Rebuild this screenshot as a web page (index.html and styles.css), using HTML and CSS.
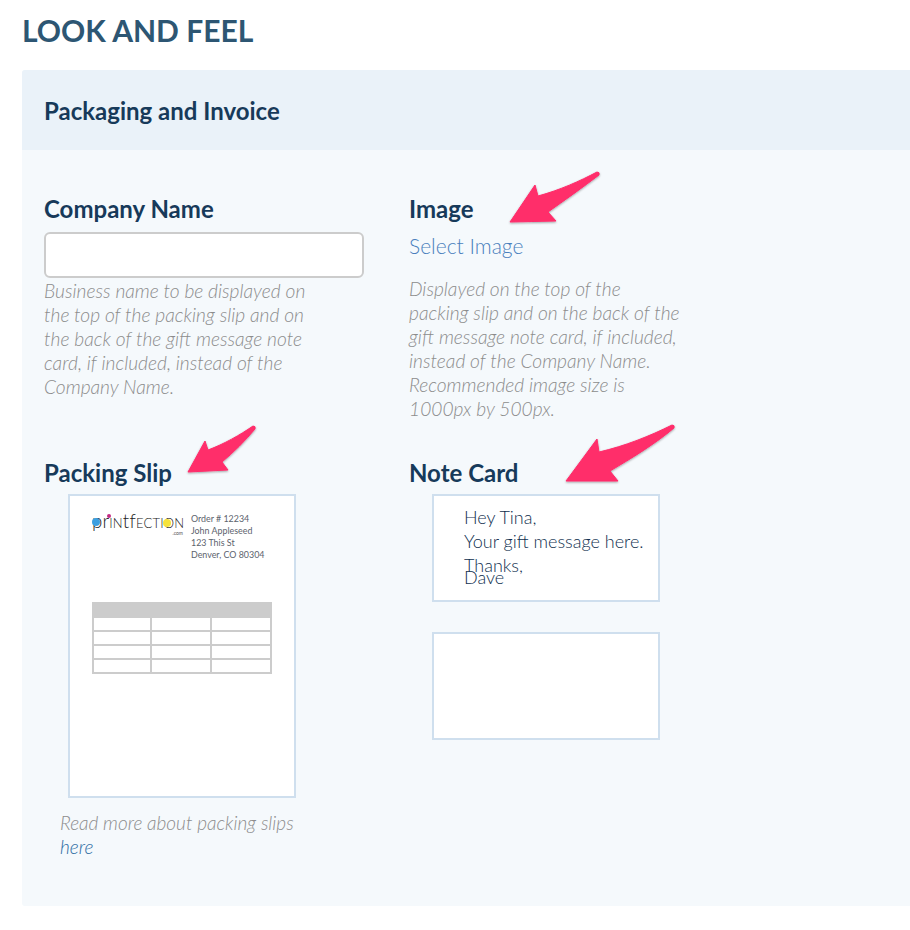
FILE: index.html
```html
<!DOCTYPE html>
<html lang="en">
<head>
    <meta charset="UTF-8">
    <meta name="viewport" content="width=device-width, initial-scale=1.0">
    <title>Look and Feel</title>
    <link rel="stylesheet" href="styles.css">
</head>
<body>
    <h1 class="page-title">LOOK AND FEEL</h1>

    <div class="panel">
        <div class="panel-header">Packaging and Invoice</div>
        <div class="panel-body">
            <div class="field">
                <label class="field-label">Company Name</label>
                <input class="text-input" type="text">
                <p class="hint">Business name to be displayed on the top of the packing slip and on the back of the gift message note card, if included, instead of the Company Name.</p>
            </div>
            <div class="field">
                <label class="field-label">Image</label>
                <a class="select-link" href="#">Select Image</a>
                <p class="hint hint-image">Displayed on the top of the packing slip and on the back of the gift message note card, if included, instead of the Company Name. Recommended image size is 1000px by 500px.</p>
            </div>

            <div class="field">
                <label class="field-label">Packing Slip</label>
                <div class="slip">
                    <div class="slip-top">
                        <div class="logo">
                            <span class="logo-name">pr<span class="logo-small">in</span>tf<span class="logo-small">ection</span></span>
                            <span class="logo-dot logo-dot-blue"></span>
                            <span class="logo-dot logo-dot-pink"></span>
                            <span class="logo-dot logo-dot-yellow"></span>
                            <span class="logo-com">.com</span>
                        </div>
                        <div class="slip-address">
                            Order # 12234<br>
                            John Appleseed<br>
                            123 This St<br>
                            Denver, CO 80304
                        </div>
                    </div>
                    <div class="slip-table">
                        <div class="slip-table-head"></div>
                        <div class="slip-cell"></div><div class="slip-cell"></div><div class="slip-cell"></div>
                        <div class="slip-cell"></div><div class="slip-cell"></div><div class="slip-cell"></div>
                        <div class="slip-cell"></div><div class="slip-cell"></div><div class="slip-cell"></div>
                        <div class="slip-cell"></div><div class="slip-cell"></div><div class="slip-cell"></div>
                    </div>
                </div>
                <p class="hint hint-slip">Read more about packing slips <a href="#">here</a></p>
            </div>
            <div class="field">
                <label class="field-label">Note Card</label>
                <div class="card">
                    <div class="card-line">Hey Tina,</div>
                    <div class="card-line">Your gift message here.</div>
                    <div class="card-line">Thanks,</div>
                    <div class="card-line card-sign">Dave</div>
                </div>
                <div class="card card-back"></div>
            </div>
        </div>
    </div>

    <!-- annotation arrows -->
    <svg class="arrows" width="910" height="930" viewBox="0 0 910 930">
        <defs>
            <filter id="arrow-shadow" x="-20%" y="-20%" width="140%" height="140%">
                <feDropShadow dx="0" dy="1" stdDeviation="1" flood-color="#000" flood-opacity="0.35"/>
            </filter>
        </defs>
        <g fill="#ff2d6b" stroke="#ff2d6b" stroke-width="1" stroke-linejoin="round" filter="url(#arrow-shadow)">
            <path d="M510 222 L535 185 L538 196 C560 190 580 181 597 172 Q600 172 599 175 C582 188 565 200 548 212 L556 221 Z"/>
            <path d="M188 472 L205 441 L208 450 C224 444 240 435 253 426 Q256 426 255 429 C245 441 234 452 222 462 L228 470 Z"/>
            <path d="M566 481 L597 439 L599 452 C625 446 650 436 672 425 Q675 425 674 428 C655 444 632 458 610 471 L618 481 Z"/>
        </g>
    </svg>
</body>
</html>
```

FILE: styles.css
```css
body {
    margin: 0;
    background: #fff;
    font-family: "Lato", sans-serif;
    width: 910px;
    height: 930px;
    overflow: hidden;
    position: relative;
}
.page-title {
    margin: 0;
    padding: 11px 0 0 22px;
    height: 70px;
    box-sizing: border-box;
    font-size: 30px;
    line-height: 38px;
    font-weight: 700;
    color: #2d5673;
}
.panel {
    margin-left: 22px;
    height: 836px;
    border-radius: 3px 0 0 3px;
    background: #f5f9fc;
}
.panel-header {
    height: 80px;
    padding-left: 22px;
    background: #eaf2f9;
    border-radius: 3px 0 0 0;
    font-size: 24px;
    line-height: 82px;
    font-weight: 700;
    color: #173a5a;
}
.panel-body {
    display: grid;
    grid-template-columns: 365px 1fr;
    grid-template-rows: 264px 1fr;
    padding: 42px 0 0 22px;
}
.field-label {
    display: block;
    height: 40px;
    font-size: 24px;
    line-height: 34px;
    font-weight: 700;
    color: #173a5a;
}
.text-input {
    display: block;
    width: 320px;
    height: 46px;
    box-sizing: border-box;
    background: #fff;
    border: 2px solid #ccc;
    border-radius: 6px;
}
.hint {
    margin: 1px 0 0;
    width: 274px;
    font-size: 19.2px;
    line-height: 24px;
    font-style: italic;
    font-weight: 300;
    color: #8c8c8c;
}
.hint-image {
    margin-top: 17px;
}
.hint-slip {
    width: 245px;
    margin: 13px 0 0 16px;
    font-size: 19px;
}
.hint-slip a {
    color: #2d6da3;
    text-decoration: none;
}
.select-link {
    display: block;
    font-size: 21px;
    line-height: 28px;
    font-weight: 300;
    color: #4a7fbd;
    text-decoration: none;
}
.slip {
    width: 228px;
    height: 304px;
    box-sizing: border-box;
    margin: -2px 0 0 24px;
    padding: 16px 22px 0;
    background: #fff;
    border: 2px solid #cfdfee;
}
.slip-top {
    display: flex;
    gap: 7px;
    height: 90px;
}
.logo {
    position: relative;
    width: 92px;
    height: 26px;
}
.logo-name {
    display: block;
    font-size: 18.6px;
    line-height: 18px;
    font-weight: 300;
    letter-spacing: 0.2px;
    color: #222;
    white-space: nowrap;
}
.logo-small {
    font-variant: small-caps;
}
.logo-dot {
    position: absolute;
    border-radius: 50%;
}
.logo-dot-blue {
    left: 0;
    top: 6px;
    width: 8px;
    height: 8px;
    background: #3d9fe0;
}
.logo-dot-pink {
    left: 15px;
    top: 2px;
    width: 4px;
    height: 4px;
    background: #c22a82;
}
.logo-dot-yellow {
    left: 71px;
    top: 7px;
    width: 8px;
    height: 8px;
    background: #f5e33a;
}
.logo-com {
    position: absolute;
    right: 1px;
    top: 18px;
    font-size: 5px;
    line-height: 6px;
    color: #555;
}
.slip-address {
    font-size: 8.9px;
    line-height: 12px;
    padding-top: 1px;
    color: #5c636d;
    white-space: nowrap;
}
.slip-table {
    display: grid;
    grid-template-columns: 56px 58px 58px;
    grid-template-rows: 14px;
    grid-auto-rows: 12px;
    gap: 2px;
    width: 180px;
    box-sizing: border-box;
    padding: 0 2px 2px;
    background: #ccc;
}
.slip-table-head {
    grid-column: 1 / -1;
}
.slip-cell {
    background: #fff;
}
.card {
    width: 228px;
    height: 108px;
    box-sizing: border-box;
    margin: -2px 0 0 23px;
    padding: 9px 0 0 30px;
    background: #fff;
    border: 2px solid #cfdfee;
    font-size: 18px;
    font-weight: 300;
    color: #10304f;
}
.card-line {
    height: 24px;
    line-height: 24px;
    white-space: nowrap;
}
.card-sign {
    margin-top: -12px;
}
.card-back {
    margin-top: 30px;
}
.arrows {
    position: absolute;
    left: 0;
    top: 0;
    pointer-events: none;
}
```
